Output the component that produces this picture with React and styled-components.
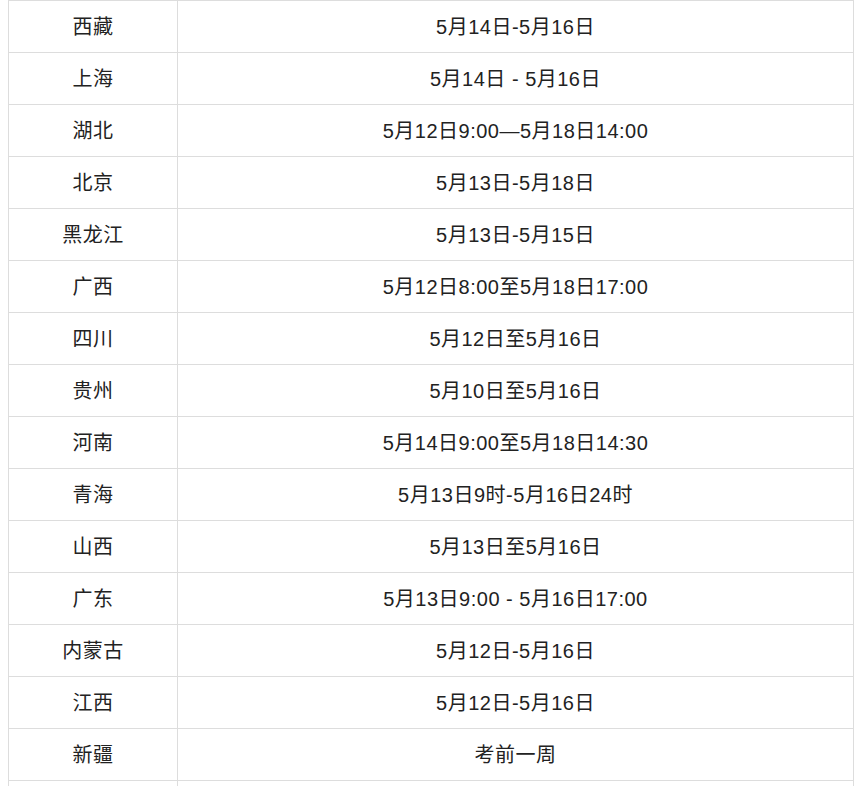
import React from 'react';
import styled, { createGlobalStyle } from 'styled-components';

const GlobalStyle = createGlobalStyle`
  html, body {
    margin: 0;
    padding: 0;
    background: #ffffff;
  }
  body {
    padding: 0 8px;
    font-family: "Liberation Sans", Arial, "Noto Sans CJK SC", sans-serif;
  }
`;

const Table = styled.table`
  width: 846px;
  border-collapse: collapse;
  table-layout: fixed;
  color: #222222;
  font-size: 20px;
  letter-spacing: 0.5px;
`;

const Row = styled.tr`
  height: 52px;
`;

const Cell = styled.td`
  width: ${(p) => (p.$narrow ? '168px' : 'auto')};
  border: 1px solid #dddddd;
  padding: 0;
  text-align: center;
  vertical-align: middle;
  line-height: 26px;
`;

const rows = [
  ['西藏', '5月14日-5月16日'],
  ['上海', '5月14日 - 5月16日'],
  ['湖北', '5月12日9:00—5月18日14:00'],
  ['北京', '5月13日-5月18日'],
  ['黑龙江', '5月13日-5月15日'],
  ['广西', '5月12日8:00至5月18日17:00'],
  ['四川', '5月12日至5月16日'],
  ['贵州', '5月10日至5月16日'],
  ['河南', '5月14日9:00至5月18日14:30'],
  ['青海', '5月13日9时-5月16日24时'],
  ['山西', '5月13日至5月16日'],
  ['广东', '5月13日9:00 - 5月16日17:00'],
  ['内蒙古', '5月12日-5月16日'],
  ['江西', '5月12日-5月16日'],
  ['新疆', '考前一周'],
  ['', ''],
];

export default function App() {
  return (
    <>
      <GlobalStyle />
      <Table>
        <tbody>
          {rows.map(([prov, date], i) => (
            <Row key={i}>
              <Cell $narrow>{prov}</Cell>
              <Cell>{date}</Cell>
            </Row>
          ))}
        </tbody>
      </Table>
    </>
  );
}
